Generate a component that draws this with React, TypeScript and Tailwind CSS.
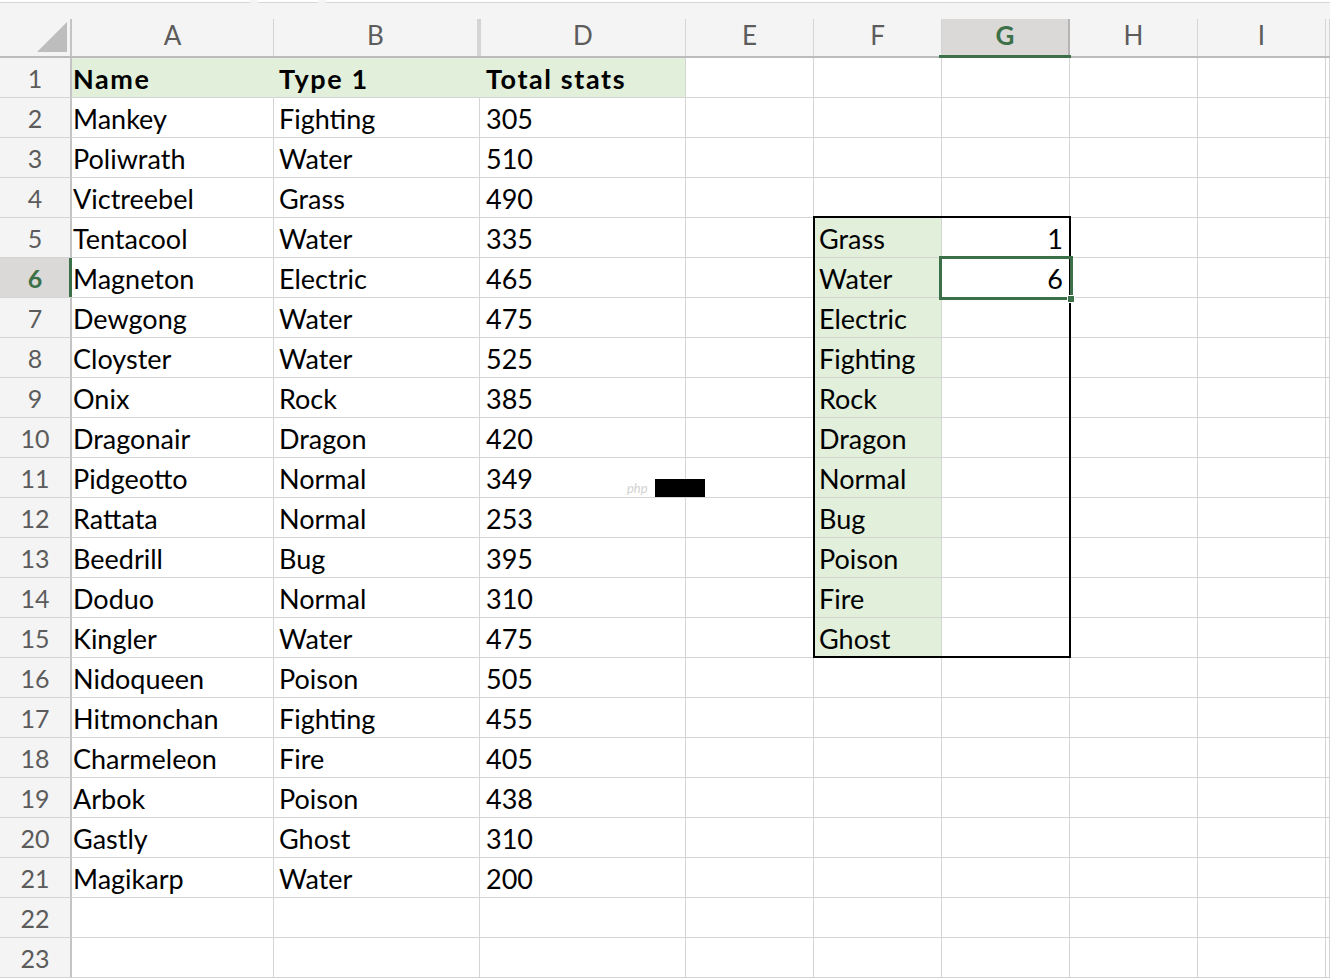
import React from "react";

// column widths (A, B, D, E, F, G, H, I, J) — C is hidden
const COLS = [
  { key: "A", w: 202, pad: "pl-[1px]" },
  { key: "B", w: 206, pad: "pl-[5px]" },
  { key: "D", w: 206, pad: "pl-[6px]" },
  { key: "E", w: 128, pad: "pl-[5px]" },
  { key: "F", w: 128, pad: "pl-[5px]" },
  { key: "G", w: 128, pad: "pl-[5px]" },
  { key: "H", w: 128, pad: "pl-[5px]" },
  { key: "I", w: 128, pad: "pl-[5px]" },
  { key: "", w: 4, pad: "" },
];

const DATA: string[][] = [
  ["Mankey", "Fighting", "305"],
  ["Poliwrath", "Water", "510"],
  ["Victreebel", "Grass", "490"],
  ["Tentacool", "Water", "335"],
  ["Magneton", "Electric", "465"],
  ["Dewgong", "Water", "475"],
  ["Cloyster", "Water", "525"],
  ["Onix", "Rock", "385"],
  ["Dragonair", "Dragon", "420"],
  ["Pidgeotto", "Normal", "349"],
  ["Rattata", "Normal", "253"],
  ["Beedrill", "Bug", "395"],
  ["Doduo", "Normal", "310"],
  ["Kingler", "Water", "475"],
  ["Nidoqueen", "Poison", "505"],
  ["Hitmonchan", "Fighting", "455"],
  ["Charmeleon", "Fire", "405"],
  ["Arbok", "Poison", "438"],
  ["Gastly", "Ghost", "310"],
  ["Magikarp", "Water", "200"],
];

const TYPES = ["Grass", "Water", "Electric", "Fighting", "Rock", "Dragon", "Normal", "Bug", "Poison", "Fire", "Ghost"];
const COUNTS: Record<number, string> = { 5: "1", 6: "6" };

const FONT = { fontFamily: "Lato, 'Open Sans', sans-serif" };

function cellText(row: number, col: string): string {
  if (row === 1) {
    if (col === "A") return "Name";
    if (col === "B") return "Type 1";
    if (col === "D") return "Total stats";
    return "";
  }
  const d = DATA[row - 2];
  if (d) {
    if (col === "A") return d[0];
    if (col === "B") return d[1];
    if (col === "D") return d[2];
  }
  if (col === "F" && row >= 5 && row <= 15) return TYPES[row - 5];
  if (col === "G" && COUNTS[row]) return COUNTS[row];
  return "";
}

export default function App() {
  const rows = Array.from({ length: 23 }, (_, i) => i + 1);

  return (
    <div className="w-[1330px] h-[978px] overflow-hidden bg-white relative select-none" style={FONT}>
      {/* remains of the formula bar */}
      <div className="h-[19px] bg-[#f4f4f4] flex items-start gap-[8px]">
        <div className="w-[250px] h-[3px] bg-white border-b border-[#d6d6d6]" />
        <div className="w-[60px] h-[3px] bg-white border-b border-[#d6d6d6]" />
        <div className="flex-1 h-[3px] bg-white border-b border-[#d6d6d6]" />
      </div>

      {/* column headers */}
      <div className="flex h-[39px] bg-[#f4f4f4] border-b-2 border-[#bcbcbc]">
        <div className="w-[72px] shrink-0 flex items-start justify-end pt-[3px] pr-[3px] border-r-2 border-[#c4c4c4]">
          <svg width="30" height="30" viewBox="0 0 30 30">
            <polygon points="30,0 30,30 0,30" fill="#bdbdbd" />
          </svg>
        </div>
        {COLS.map((c) => {
          const sel = c.key === "G";
          return (
            <div
              key={c.key || "J"}
              className={`shrink-0 h-full relative flex items-center justify-center pb-[4px] text-[26px] ${
                sel ? "bg-[#dad9d7] text-[#3b7048] font-bold border-r-2 border-[#b4b4b4]" : "text-[#5c5c5c] border-r border-[#d4d4d4]"
              } ${c.key === "D" ? "border-l-[3px] border-l-[#d4d4d4]" : ""}`}
              style={{ width: c.key === "D" ? c.w + 2 : c.key === "B" ? c.w - 2 : c.w }}
            >
              {c.key}
              {sel && <div className="absolute left-[-3px] right-[-3px] bottom-[-2px] h-[3px] bg-[#3b7048]" />}
            </div>
          );
        })}
      </div>

      {/* grid */}
      <div className="relative">
        {rows.map((r) => (
          <div key={r} className="flex h-[40px]">
            <div
              className={`w-[72px] shrink-0 relative flex items-center justify-center pt-[2px] text-[25px] border-b border-[#d4d4d4] border-r-2 border-r-[#c4c4c4] ${
                r === 6 ? "bg-[#dad9d7] text-[#3b7048] font-bold" : "bg-[#f4f4f4] text-[#5c5c5c]"
              }`}
            >
              {r}
              {r === 6 && <div className="absolute right-[-2px] top-0 bottom-0 w-[3px] bg-[#3b7048]" />}
            </div>
            {COLS.map((c) => {
              const txt = cellText(r, c.key);
              const green = (r === 1 && ["A", "B", "D"].includes(c.key)) || (c.key === "F" && r >= 5 && r <= 15);
              const right = c.key === "G";
              const headerFill = r === 1 && ["A", "B"].includes(c.key);
              return (
                <div
                  key={c.key || "J"}
                  className={`shrink-0 h-full flex items-center pt-[3px] text-[27px] text-black whitespace-nowrap border-b ${
                    green ? "bg-[#e2efda]" : "bg-white"
                  } ${headerFill ? "border-b-[#d4d4d4] border-r-[#e2efda]" : "border-[#d4d4d4]"} border-r ${
                    right ? "justify-end pr-[6px]" : c.pad
                  } ${r === 1 ? "font-bold tracking-[1.6px]" : ""}`}
                  style={{ width: c.w }}
                >
                  {txt}
                </div>
              );
            })}
          </div>
        ))}

        {/* border around F5:G15 */}
        <div className="absolute left-[813px] top-[158px] w-[258px] h-[442px] border-2 border-black pointer-events-none" />

        {/* active cell G6 */}
        <div className="absolute left-[939px] top-[198px] w-[134px] h-[44px] border-[3px] border-[#3b7048] pointer-events-none" />
        <div className="absolute left-[1067px] top-[237px] w-[8px] h-[8px] bg-[#3b7048] border border-white" />

        {/* stray artefact */}
        <div className="absolute left-[627px] top-[421px] flex items-center">
          <span className="w-[28px] text-[13px] italic text-[#d2d2d2] leading-none">php</span>
          <span className="w-[50px] h-[18px] bg-black" />
        </div>
      </div>
    </div>
  );
}
